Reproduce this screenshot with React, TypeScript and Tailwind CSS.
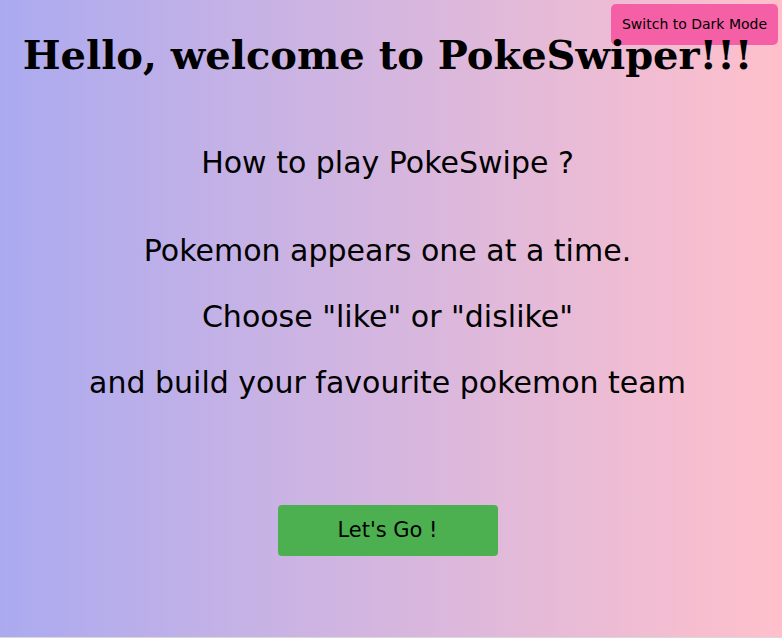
import React from "react";

export default function App() {
  return (
    <div className="relative w-full h-[637px] bg-gradient-to-r from-[#abaaf0] to-[#ffc0cb] text-black text-center border-b border-[#d9d9d9] box-content font-['Comic_Sans_MS','DejaVu_Sans',sans-serif]">
      <button className="absolute top-[4px] right-[4px] w-[167px] h-[41px] rounded-[5px] bg-[#f55fa5] text-[14px] text-black">
        Switch to Dark Mode
      </button>
      <div className="relative flex flex-col items-center pr-[7px] pointer-events-none">
        <h1 className="mt-[31px] h-[48px] leading-[48px] text-[40px] font-bold font-['Georgia','DejaVu_Serif',serif] whitespace-nowrap">
          Hello, welcome to PokeSwiper!!!
        </h1>
        <p className="mt-[64px] h-[40px] leading-[40px] text-[30px]">
          How to play PokeSwipe ?
        </p>
        <div className="mt-[35px] flex flex-col text-[30px] leading-[66px]">
          <p>Pokemon appears one at a time.</p>
          <p>Choose "like" or "dislike"</p>
          <p>and build your favourite pokemon team</p>
        </div>
        <button className="pointer-events-auto mt-[89px] w-[220px] h-[51px] rounded-[4px] bg-[#4caf50] text-[21px] text-black">
          Let's Go !
        </button>
      </div>
    </div>
  );
}
